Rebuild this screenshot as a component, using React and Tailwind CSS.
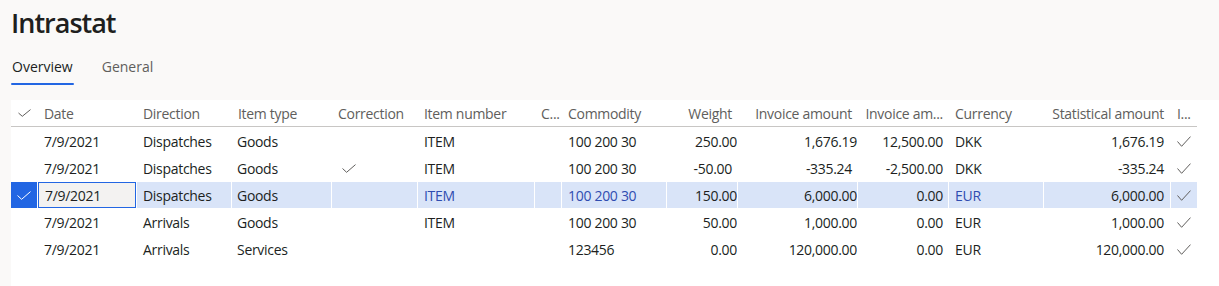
import React from "react";

const cols = "grid-cols-[26px_99px_95px_100px_86px_117px_27px_105px_71px_120px_91px_95px_127px_27px]";

function Check({ className = "", color = "#605e5c", w = 14, h = 9 }) {
  return (
    <svg width={w} height={h} viewBox={`0 0 ${w} ${h}`} className={className} fill="none">
      <path d={`M0.5 ${h / 2} L${w * 0.33} ${h - 0.7} L${w - 0.5} 0.6`} stroke={color} strokeWidth="1" />
    </svg>
  );
}

const headers = [
  { label: "Date" },
  { label: "Direction" },
  { label: "Item type" },
  { label: "Correction" },
  { label: "Item number" },
  { label: "C..." },
  { label: "Commodity" },
  { label: "Weight", right: true, pr: "pr-[5px]" },
  { label: "Invoice amount", right: true, pr: "pr-[5px]" },
  { label: "Invoice am...", right: true, pr: "pr-[5px]" },
  { label: "Currency" },
  { label: "Statistical amount", right: true, pr: "pr-[6px]" },
  { label: "I..." },
];

const rows = [
  ["7/9/2021", "Dispatches", "Goods", false, "ITEM", "", "100 200 30", "250.00", "1,676.19", "12,500.00", "DKK", "1,676.19"],
  ["7/9/2021", "Dispatches", "Goods", true, "ITEM", "", "100 200 30", "-50.00", "-335.24", "-2,500.00", "DKK", "-335.24"],
  ["7/9/2021", "Dispatches", "Goods", false, "ITEM", "", "100 200 30", "150.00", "6,000.00", "0.00", "EUR", "6,000.00"],
  ["7/9/2021", "Arrivals", "Goods", false, "ITEM", "", "100 200 30", "50.00", "1,000.00", "0.00", "EUR", "1,000.00"],
  ["7/9/2021", "Arrivals", "Services", false, "", "", "123456", "0.00", "120,000.00", "0.00", "EUR", "120,000.00"],
];

function Row({ r, selected }) {
  const bg = selected ? "bg-[#d9e4f8]" : "";
  const link = selected ? "text-[#2f4cb0]" : "";
  const cell = `flex items-center h-[27px] border-t border-l border-white whitespace-nowrap ${bg}`;
  const neg = (v) => (v.startsWith("-") ? "pr-[5px]" : "pr-0");
  return (
    <>
      <div className={`flex items-center justify-center h-[27px] border-t border-white ${selected ? "bg-[#2266e3]" : ""}`}>
        {selected && <Check color="#ffffff" w={14} h={9} />}
      </div>
      {selected ? (
        <div className="h-[27px] border-t border-l border-white">
          <div className="h-full flex items-center pl-[6px] pt-[1px] border border-[#2266e3] bg-[#f3f2f1]">{r[0]}</div>
        </div>
      ) : (
        <div className={`${cell} pl-[6px]`}>{r[0]}</div>
      )}
      <div className={`${cell} pl-[6px]`}>{r[1]}</div>
      <div className={`${cell} pl-[5px]`}>{r[2]}</div>
      <div className={`${cell} pl-[10px]`}>{r[3] && <Check w={14} h={9} />}</div>
      <div className={`${cell} pl-[6px] ${link}`}>{r[4]}</div>
      <div className={`${cell} pl-[5px]`}>{r[5]}</div>
      <div className={`${cell} pl-[6px] ${link}`}>{r[6]}</div>
      <div className={`${cell} justify-end ${neg(r[7])}`}>{r[7]}</div>
      <div className={`${cell} justify-end ${neg(r[8])}`}>{r[8]}</div>
      <div className={`${cell} justify-end pr-[5px]`}>{r[9]}</div>
      <div className={`${cell} pl-[6px] ${link}`}>{r[10]}</div>
      <div className={`${cell} justify-end pr-[6px]`}>{r[11]}</div>
      <div className={`${cell} pl-[6px]`}>
        <Check w={14} h={11} />
      </div>
    </>
  );
}

export default function App() {
  return (
    <div
      className="w-[1219px] h-[286px] overflow-hidden bg-[#faf9f8] text-[#201f1e]"
      style={{ fontFamily: '"Open Sans", "Noto Sans", sans-serif' }}
    >
      <h1 className="pl-[11px] pt-[3px] h-[40px] text-[27px] leading-[40px] font-semibold tracking-[-1px]">Intrastat</h1>
      <div className="flex gap-[28px] pl-[11px] mt-[17px] text-[14px]">
        <div className="flex flex-col">
          <span className="leading-[20px] px-[1px]">Overview</span>
          <span className="mt-[6px] h-[2px] rounded-full bg-[#2266e3]" />
        </div>
        <span className="leading-[20px] text-[#605e5c]">General</span>
      </div>
      <div className="ml-[11px] mt-[15px] bg-white h-[200px] text-[14px] tracking-[-0.3px]">
        <div className={`grid ${cols} w-[1186px] border-b-2 border-[#c8c6c4] text-[#605e5c]`}>
          <div className="flex items-center justify-center h-[26px]">
            <Check w={13} h={8} />
          </div>
          {headers.map((h) => (
            <div
              key={h.label}
              className={`flex items-center h-[26px] whitespace-nowrap ${h.right ? `justify-end ${h.pr}` : "pl-[7px]"}`}
            >
              {h.label}
            </div>
          ))}
        </div>
        <div className={`grid ${cols} w-[1186px] -mt-[1px]`}>
          {rows.map((r, i) => (
            <Row key={i} r={r} selected={i === 2} />
          ))}
        </div>
      </div>
    </div>
  );
}
